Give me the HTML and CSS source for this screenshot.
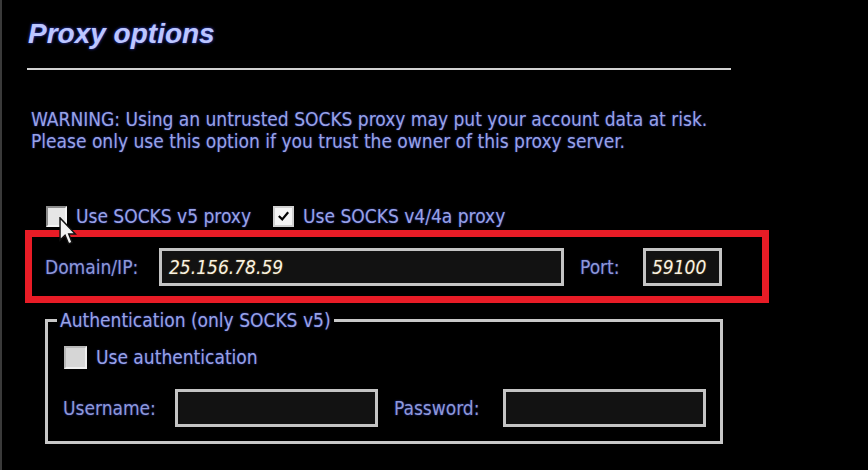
FILE: index.html
```html
<!DOCTYPE html>
<html>
<head>
    <title>Proxy options</title>
    <link rel="stylesheet" href="styles.css">
</head>
<body>
    <div class="panel">
        <h1 class="title">Proxy options</h1>
        <div class="rule"></div>

        <p class="warning">
            WARNING: Using an untrusted SOCKS proxy may put your account data at risk.<br>
            Please only use this option if you trust the owner of this proxy server.
        </p>

        <div class="options">
            <label class="check">
                <span class="box"></span>
                <span>Use SOCKS v5 proxy</span>
                <svg class="cursor" viewBox="0 0 12 19" width="18" height="28">
                    <path d="M0.6 0.6 L0.6 15.6 L4 12.4 L6.4 18.2 L8.8 17.2 L6.5 11.6 L11 11.6 Z" fill="#f2f2f2" stroke="#111" stroke-width="1"/>
                </svg>
            </label>
            <label class="check">
                <span class="box checked">
                    <svg viewBox="0 0 20 20" width="20" height="20">
                        <path d="M4.5 10 L8.5 14 L15.5 5.5" fill="none" stroke="#000" stroke-width="2.6"/>
                    </svg>
                </span>
                <span>Use SOCKS v4/4a proxy</span>
            </label>
        </div>

        <div class="server">
            <span class="field-label host-label">Domain/IP:</span>
            <div class="input host">25.156.78.59</div>
            <span class="field-label port-label">Port:</span>
            <div class="input port">59100</div>
        </div>

        <fieldset class="auth">
            <legend>Authentication (only SOCKS v5)</legend>
            <label class="check auth-check">
                <span class="box disabled"></span>
                <span>Use authentication</span>
            </label>
            <div class="credentials">
                <span class="field-label user-label">Username:</span>
                <div class="input cred"></div>
                <span class="field-label pass-label">Password:</span>
                <div class="input cred"></div>
            </div>
        </fieldset>
    </div>
</body>
</html>
```

FILE: styles.css
```css
body {
    margin: 0;
    padding: 0;
    height: 470px;
    background: #000000;
    overflow: hidden;
    font-family: "DejaVu Sans Condensed", "DejaVu Sans", sans-serif;
    font-stretch: condensed;
    font-size: 19px;
    color: #98a2e6;
}

.panel {
    height: 470px;
    box-sizing: border-box;
    border-left: 2px solid #3a3a3a;
    padding-top: 18px;
}

.title {
    margin: 0 0 0 26px;
    font-family: "Liberation Sans", Arial, sans-serif;
    font-stretch: normal;
    font-size: 28px;
    line-height: 32px;
    font-weight: bold;
    font-style: italic;
    color: #bcc6ff;
    text-shadow: 0 0 3px #3848e8;
}

.rule {
    margin: 18px 0 0 25px;
    width: 704px;
    height: 2px;
    background: #d2d2d2;
}

.warning {
    margin: 38px 0 0 29px;
    line-height: 22px;
    text-shadow: 0 0 2px #2a36a0;
}

.options {
    display: flex;
    align-items: center;
    height: 24px;
    margin: 52px 0 0 44px;
    gap: 22px;
}

.check {
    display: flex;
    align-items: center;
    gap: 9px;
    position: relative;
    text-shadow: 0 0 2px #2a36a0;
}

.box {
    width: 17px;
    height: 17px;
    background: #e6e6e6;
    border: 2px solid #8c8c8c;
    border-right-color: #f4f4f4;
    border-bottom-color: #f4f4f4;
    display: flex;
    align-items: center;
    justify-content: center;
}

.box.checked {
    background: #f4f4f4;
    border-color: #d0d0d0;
}

.box.checked svg {
    display: block;
}

.box.disabled {
    width: 19px;
    height: 19px;
    background: #d6d6d6;
    border-color: #b8b8b8 #eeeeee #eeeeee #b8b8b8;
}

.cursor {
    position: absolute;
    left: 13px;
    top: 12px;
}

.server {
    display: flex;
    align-items: center;
    width: 744px;
    height: 73px;
    box-sizing: border-box;
    margin: 2px 0 0 23px;
    padding-left: 13px;
    border: 7px solid #e81c26;
}

.field-label {
    text-shadow: 0 0 2px #2a36a0;
    color: #8e98d8;
}

.host-label {
    width: 114px;
}

.port-label {
    width: 63px;
    margin-left: 16px;
}

.input {
    height: 38px;
    box-sizing: border-box;
    border: 3px solid #c4c4c4;
    background: #121212;
    padding-left: 7px;
    display: flex;
    align-items: center;
    font-style: italic;
    color: #f8f2e2;
    text-shadow: 0 0 2px #6a5020;
}

.host {
    width: 405px;
}

.port {
    width: 79px;
    padding-left: 6px;
}

.auth {
    width: 678px;
    box-sizing: border-box;
    margin: 6px 0 0 43px;
    padding: 14px 0 14px 9px;
    border: 3px solid #c8c8c8;
}

.auth legend {
    padding: 0 3px;
    line-height: 22px;
    text-shadow: 0 0 2px #2a36a0;
}

.auth-check {
    height: 24px;
    margin-left: 7px;
}

.credentials {
    display: flex;
    align-items: center;
    margin-top: 20px;
    padding-left: 6px;
}

.user-label {
    width: 112px;
}

.pass-label {
    width: 109px;
    margin-left: 16px;
}

.cred {
    width: 203px;
}
```
